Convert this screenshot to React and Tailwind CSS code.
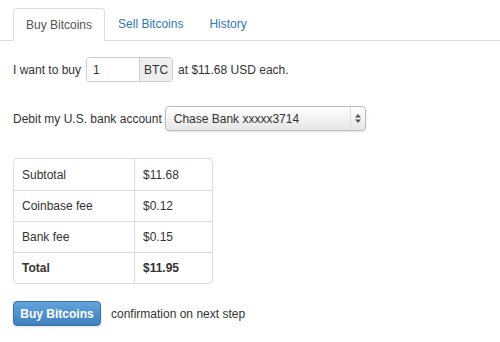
export default function App() {
  const rows = [
    { label: "Subtotal", value: "$11.68" },
    { label: "Coinbase fee", value: "$0.12" },
    { label: "Bank fee", value: "$0.15" },
  ];

  return (
    <div className="w-[500px] h-[342px] bg-white text-[#333] text-[12px] font-['Helvetica_Neue','Liberation_Sans',Arial,sans-serif] overflow-hidden">
      {/* tabs */}
      <div className="pt-2 flex border-b border-[#ddd] pl-[13px] h-[41px]">
        <div className="px-3 h-[33px] flex items-center border border-[#ddd] border-b-white rounded-t bg-white text-[#555] -mb-px">
          Buy Bitcoins
        </div>
        <div className="px-[13px] h-8 flex items-center text-[#3278b8]">Sell Bitcoins</div>
        <div className="px-[13px] h-8 flex items-center text-[#3278b8]">History</div>
      </div>

      <div className="pl-[13px]">
        <div className="flex items-center mt-4 h-[25px]">
          <span>I want to buy</span>
          <div className="flex ml-[5px] h-[25px] rounded border border-[#ccc] overflow-hidden">
            <div className="w-[52px] bg-white px-[6px] flex items-center">1</div>
            <div className="w-[33px] bg-[#eee] border-l border-[#ccc] flex items-center justify-center">BTC</div>
          </div>
          <span className="ml-[5px]">at $11.68 USD each.</span>
        </div>

        <div className="flex items-center mt-6 h-[25px]">
          <span>Debit my U.S. bank account</span>
          <div className="ml-[3px] w-[201px] h-[25px] flex rounded border border-[#bbb] bg-gradient-to-b from-white to-[#e6e6e6] shadow-sm">
            <div className="flex-1 flex items-center px-2 text-[#333]">Chase Bank xxxxx3714</div>
            <div className="w-[15px] border-l border-[#ddd] flex flex-col items-center justify-center">
              <svg width="6" height="9" viewBox="0 0 6 9">
                <path d="M3 0 L6 3.5 L0 3.5 Z M0 5.5 L6 5.5 L3 9 Z" fill="#555" />
              </svg>
            </div>
          </div>
        </div>

        <table className="mt-[27px] w-[200px] border-separate border-spacing-0 border border-[#ddd] rounded">
          <tbody>
            {rows.map((r, i) => (
              <tr key={i} className="h-[31px]">
                <td className={`w-[120px] pl-2 ${i > 0 ? "border-t border-[#ddd]" : ""}`}>{r.label}</td>
                <td className={`pl-2 border-l border-[#ddd] ${i > 0 ? "border-t" : ""}`}>{r.value}</td>
              </tr>
            ))}
            <tr className="h-[31px] font-bold">
              <td className="pl-2 border-t border-[#ddd]">Total</td>
              <td className="pl-2 border-t border-l border-[#ddd]">$11.95</td>
            </tr>
          </tbody>
        </table>

        <div className="flex items-center mt-[17px]">
          <button className="w-[88px] h-[25px] rounded border border-[#3a73a8] bg-gradient-to-b from-[#62a3dc] to-[#3f80c0] text-white font-bold text-[12px] shadow-sm">
            Buy Bitcoins
          </button>
          <span className="ml-[10px]">confirmation on next step</span>
        </div>
      </div>
    </div>
  );
}
